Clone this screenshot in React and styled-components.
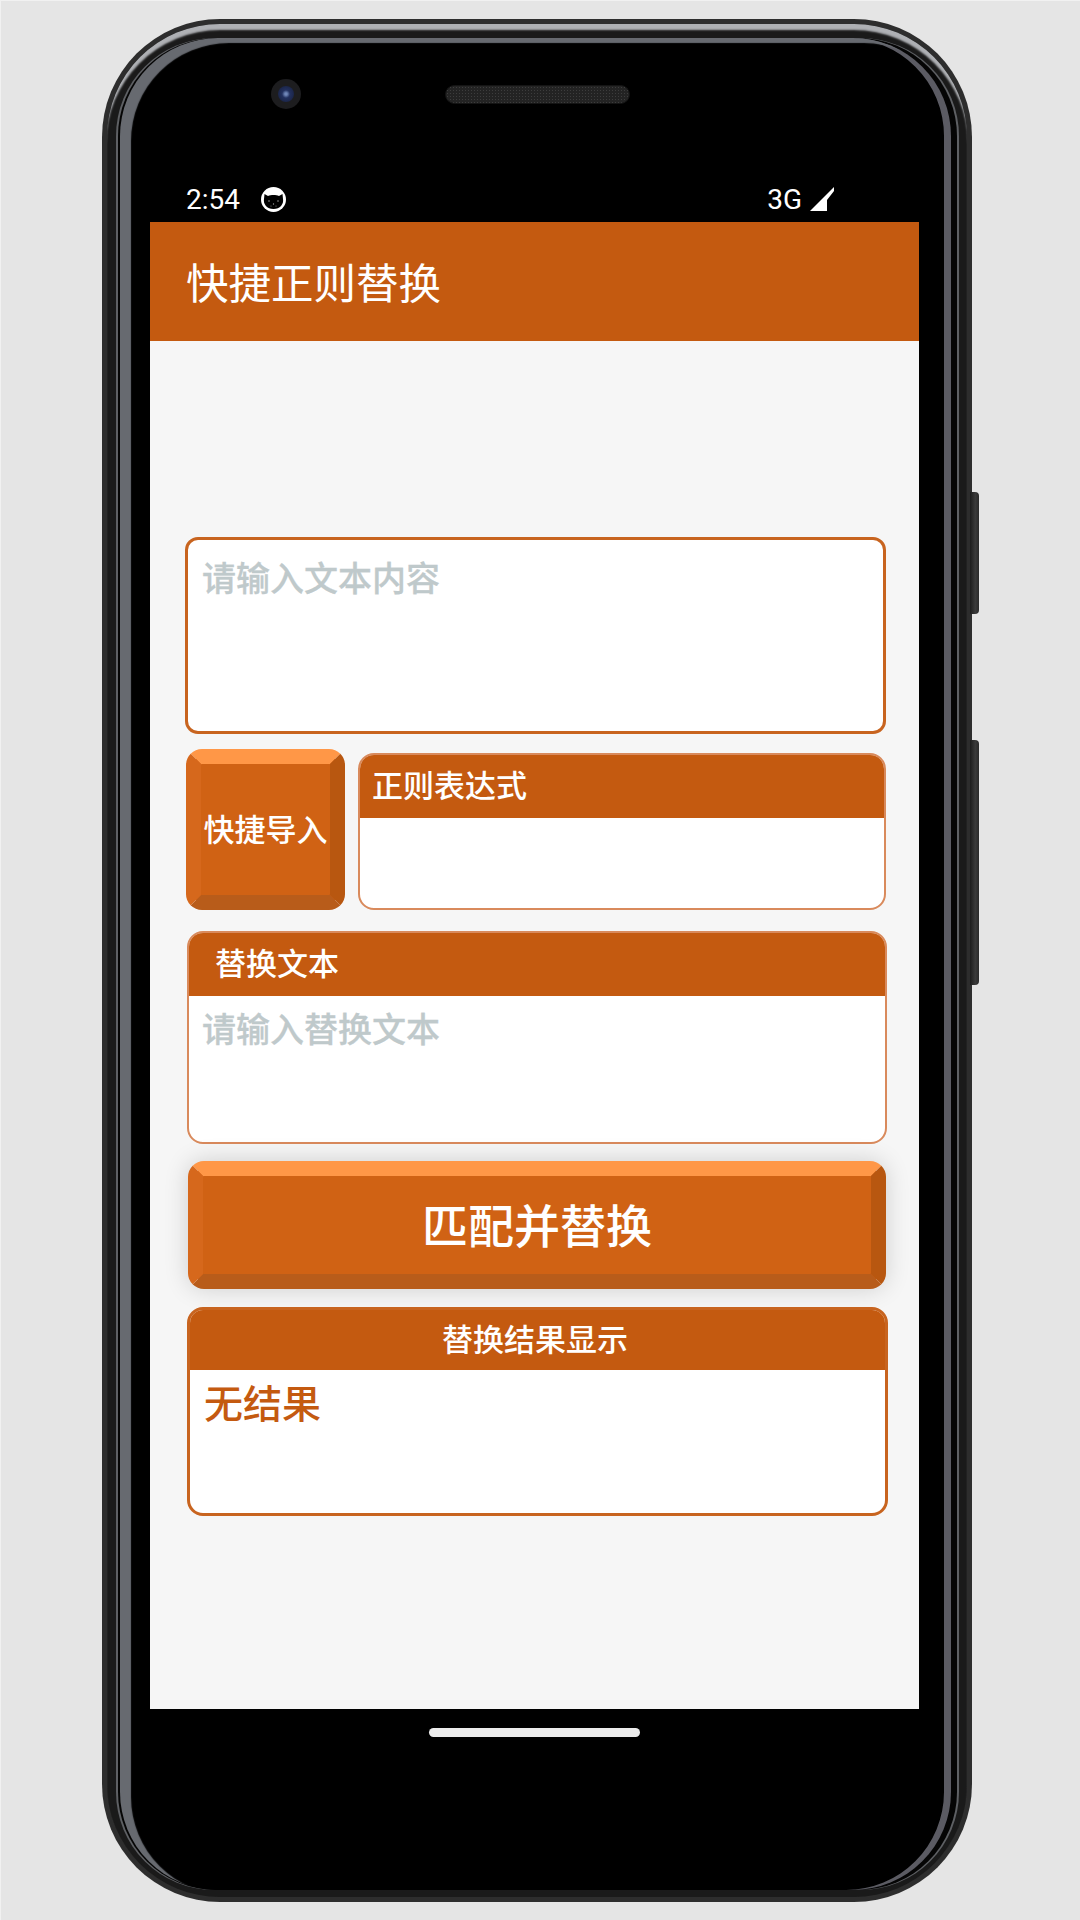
import React from "react";
import styled, { createGlobalStyle } from "styled-components";

const brand = "#c45a10";
const cjk = `"Noto Sans CJK SC", "Noto Sans", sans-serif`;

const GlobalStyle = createGlobalStyle`
  * {
    box-sizing: border-box;
  }
  body {
    margin: 0;
    background: #e5e5e5;
    font-family: ${cjk};
  }
`;

const Page = styled.div`
  position: relative;
  width: 1080px;
  height: 1920px;
  padding: 18px 107px 18px 101px;
  background: #e5e5e5;
  border-top: 1px solid #f1f1f1;
  border-left: 1px solid #f1f1f1;
  overflow: hidden;
`;

const Shell = styled.div`
  position: relative;
  width: 870px;
  height: 1883px;
  padding: 5px;
  background: #2d2d2d;
  border-radius: 118px;
`;

const SideKey = styled.div`
  position: absolute;
  left: 868px;
  top: ${(p) => p.$top}px;
  width: 9px;
  height: ${(p) => p.$height}px;
  background: linear-gradient(90deg, #1c1c1c, #3a3a3a 60%, #2a2a2a);
  border-radius: 0 4px 4px 0;
`;

const Band = styled.div`
  height: 100%;
  padding: 14px 16px 7px 13px;
  background: #1a1a1a;
  border-radius: 113px;
  box-shadow: inset 0 7px 2px -1px #aeb0b4, inset 0 1px 0 #151515;
`;

const Rim = styled.div`
  display: flex;
  flex-direction: column;
  height: 100%;
  padding: 0 32px 0 30px;
  background: #000;
  border-radius: 98px;
  box-shadow: inset 11px 5px 1px #676a70, inset -7px 0 0 #5b5b63, -2px 0 0 #050505,
    -4px 0 0 #5e6064, 6px 0 0 #050505, 8px 0 0 #5e6064;
`;

const TopBezel = styled.div`
  display: flex;
  align-items: center;
  gap: 144px;
  height: 71px;
  padding: 41px 0 0 121px;
`;

const Camera = styled.div`
  display: flex;
  align-items: center;
  justify-content: center;
  width: 30px;
  height: 30px;
  background: #1d1d1f;
  border-radius: 50%;
`;

const Lens = styled.div`
  width: 16px;
  height: 16px;
  background: radial-gradient(circle, #6f86b8 0 10%, #23315f 35%, #141c38 100%);
  border-radius: 50%;
`;

const Speaker = styled.div`
  width: 185px;
  height: 19px;
  background-color: #232323;
  background-image: radial-gradient(#3d3d3d 1px, transparent 1px);
  background-size: 3px 3px;
  border: 1px solid #141414;
  border-radius: 10px;
`;

const StatusBar = styled.div`
  display: flex;
  align-items: center;
  justify-content: space-between;
  height: 113px;
  padding: 67px 84px 0 36px;
  color: #fff;
  font-family: Roboto, sans-serif;
  font-size: 28px;
`;

const StatusGroup = styled.div`
  display: flex;
  align-items: center;
  gap: ${(p) => p.$gap}px;
`;

const Screen = styled.div`
  display: flex;
  flex-direction: column;
  height: 1487px;
  background: #f6f6f6;
`;

const AppBar = styled.div`
  display: flex;
  align-items: center;
  height: 119px;
  padding: 0 0 2px 36px;
  background: ${brand};
  color: #fff;
  font-size: 42.5px;
  font-weight: 400;
`;

const Form = styled.div`
  display: flex;
  flex-direction: column;
  padding: 196px 33px 0 35px;
`;

const TextBox = styled.div`
  height: 197px;
  padding: 14px 14px;
  background: #fff;
  border: 3px solid #c8641f;
  border-radius: 13px;
`;

const Hint = styled.div`
  color: #bfc9cb;
  font-size: 34px;
  font-weight: 500;
  line-height: 46px;
  -webkit-text-stroke: 0.3px #bfc9cb;
`;

const Row = styled.div`
  display: flex;
  align-items: flex-end;
  gap: 13px;
  height: 161px;
  margin: 15px 0 0 1px;
`;

const BevelButton = styled.button`
  display: flex;
  flex: ${(p) => (p.$small ? "0 0 159px" : "none")};
  align-items: center;
  justify-content: center;
  height: ${(p) => (p.$small ? "161px" : "128px")};
  margin: ${(p) => (p.$small ? "0" : "17px 0 0 3px")};
  padding: 0 0 ${(p) => (p.$small ? "4px" : "5px")};
  background: #d06214;
  border-style: solid;
  border-width: 15px;
  border-color: #ff9747 #b85710 #b85c1a #d6681c;
  border-radius: 16px;
  box-shadow: ${(p) => (p.$small ? "none" : "0 0 24px rgba(0, 0, 0, 0.16)")};
  color: #fff;
  font-family: ${cjk};
  font-size: ${(p) => (p.$small ? "31px" : "46px")};
  font-weight: 500;
  white-space: nowrap;
`;

const Panel = styled.div`
  display: flex;
  flex: ${(p) => (p.$fill ? "1" : "none")};
  flex-direction: column;
  height: ${(p) => p.$height}px;
  margin: ${(p) => p.$margin || "0"};
  background: #fff;
  border: ${(p) => p.$line || "2px solid #d98a5c"};
  border-radius: 16px;
  overflow: hidden;
`;

const PanelHead = styled.div`
  display: flex;
  flex: 0 0 ${(p) => p.$height}px;
  align-items: center;
  justify-content: ${(p) => (p.$center ? "center" : "flex-start")};
  padding: 0 ${(p) => (p.$center ? 5 : 0)}px 6px ${(p) => p.$indent || 0}px;
  background: ${brand};
  color: #fff;
  font-size: 31px;
  font-weight: 500;
`;

const PanelBody = styled.div`
  padding: ${(p) => p.$padding || "4px 14px"};
`;

const Result = styled.div`
  color: ${brand};
  font-size: 39px;
  font-weight: 500;
  line-height: 50px;
`;

const BottomBezel = styled.div`
  display: flex;
  justify-content: center;
  padding-top: 19px;
`;

const HomeBar = styled.div`
  width: 211px;
  height: 9px;
  background: #ececec;
  border-radius: 5px;
`;

function FaceIcon() {
  return (
    <svg width="25" height="25" viewBox="0 0 25 25">
      <circle cx="12.5" cy="12.5" r="12.5" fill="#fff" />
      <path
        d="M3 12 L3.5 7 L7 9 C10 7.6 15 7.6 18 9 L21.5 7 L22 12 C23 17 19 22 12.5 22 C6 22 2 17 3 12Z"
        fill="#000"
      />
      <circle cx="8" cy="14" r="0.8" fill="#999" />
      <circle cx="17" cy="14" r="0.8" fill="#999" />
      <circle cx="12.5" cy="17" r="0.7" fill="#999" />
      <circle cx="10" cy="19" r="0.5" fill="#999" />
      <circle cx="15" cy="19" r="0.5" fill="#999" />
    </svg>
  );
}

function SignalIcon() {
  return (
    <svg width="25" height="25" viewBox="0 0 25 25">
      <path d="M0 24 L24 0 V4 L17 13 V24Z" fill="#fff" />
    </svg>
  );
}

export default function App() {
  return (
    <>
      <GlobalStyle />
      <Page>
        <Shell>
          <SideKey $top={473} $height={122} />
          <SideKey $top={721} $height={245} />
          <Band>
            <Rim>
              <TopBezel>
                <Camera>
                  <Lens />
                </Camera>
                <Speaker />
              </TopBezel>
              <StatusBar>
                <StatusGroup $gap={21}>
                  <span>2:54</span>
                  <FaceIcon />
                </StatusGroup>
                <StatusGroup $gap={8}>
                  <span>3G</span>
                  <SignalIcon />
                </StatusGroup>
              </StatusBar>
              <Screen>
                <AppBar>快捷正则替换</AppBar>
                <Form>
                  <TextBox>
                    <Hint>请输入文本内容</Hint>
                  </TextBox>
                  <Row>
                    <BevelButton $small>快捷导入</BevelButton>
                    <Panel $fill $height={157}>
                      <PanelHead $height={63} $indent={12}>
                        正则表达式
                      </PanelHead>
                    </Panel>
                  </Row>
                  <Panel $height={213} $margin="21px -1px 0 2px">
                    <PanelHead $height={63} $indent={26}>
                      替换文本
                    </PanelHead>
                    <PanelBody $padding="9px 13px">
                      <Hint>请输入替换文本</Hint>
                    </PanelBody>
                  </Panel>
                  <BevelButton>匹配并替换</BevelButton>
                  <Panel $height={209} $margin="18px -2px 0 2px" $line="3px solid #c8641f">
                    <PanelHead $height={60} $center>
                      替换结果显示
                    </PanelHead>
                    <PanelBody $padding="6px 14px">
                      <Result>无结果</Result>
                    </PanelBody>
                  </Panel>
                </Form>
              </Screen>
              <BottomBezel>
                <HomeBar />
              </BottomBezel>
            </Rim>
          </Band>
        </Shell>
      </Page>
    </>
  );
}
